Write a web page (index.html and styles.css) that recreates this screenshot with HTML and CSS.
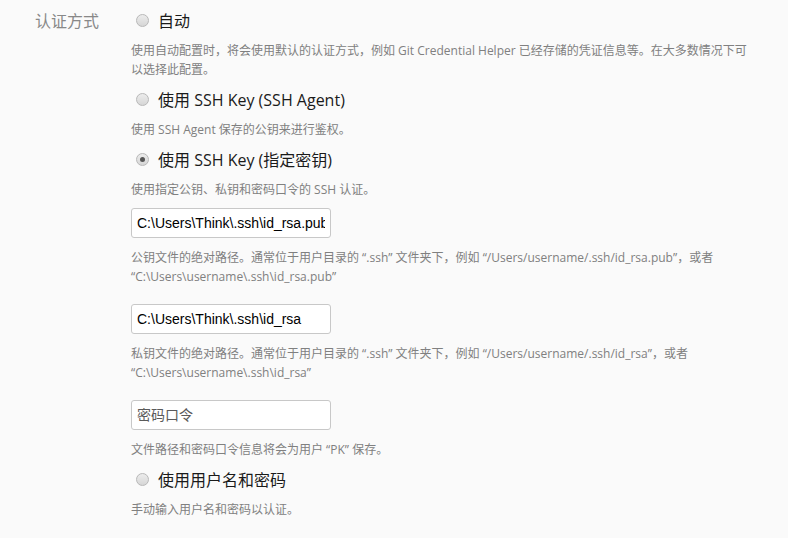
FILE: index.html
```html
<!DOCTYPE html>
<html lang="zh-CN">
<head>
    <meta charset="UTF-8">
    <meta name="viewport" content="width=device-width, initial-scale=1.0">
    <title>认证方式</title>
    <link rel="stylesheet" href="styles.css">
</head>
<body>
    <div class="setting-row">
        <div class="setting-label">认证方式</div>
        <div class="setting-body">
            <label class="option">
                <input type="radio" name="auth">
                <span>自动</span>
            </label>
            <p class="hint">使用自动配置时，将会使用默认的认证方式，例如 Git Credential Helper 已经存储的凭证信息等。在大多数情况下可以选择此配置。</p>

            <label class="option">
                <input type="radio" name="auth">
                <span>使用 SSH Key (SSH Agent)</span>
            </label>
            <p class="hint">使用 SSH Agent 保存的公钥来进行鉴权。</p>

            <label class="option">
                <input type="radio" name="auth" checked>
                <span>使用 SSH Key (指定密钥)</span>
            </label>
            <p class="hint">使用指定公钥、私钥和密码口令的 SSH 认证。</p>

            <div class="key-fields">
                <input class="text-field" type="text" value="C:\Users\Think\.ssh\id_rsa.pub">
                <p class="hint field-hint">公钥文件的绝对路径。通常位于用户目录的 “.ssh” 文件夹下，例如 “/Users/username/.ssh/id_rsa.pub”，或者 “C:\Users\username\.ssh\id_rsa.pub”</p>

                <input class="text-field" type="text" value="C:\Users\Think\.ssh\id_rsa">
                <p class="hint field-hint">私钥文件的绝对路径。通常位于用户目录的 “.ssh” 文件夹下，例如 “/Users/username/.ssh/id_rsa”，或者 “C:\Users\username\.ssh\id_rsa”</p>

                <input class="text-field" type="password" placeholder="密码口令">
                <p class="hint">文件路径和密码口令信息将会为用户 “PK” 保存。</p>
            </div>

            <label class="option">
                <input type="radio" name="auth">
                <span>使用用户名和密码</span>
            </label>
            <p class="hint">手动输入用户名和密码以认证。</p>
        </div>
    </div>
</body>
</html>
```

FILE: styles.css
```css
* {
    margin: 0;
    padding: 0;
    box-sizing: border-box;
}

body {
    background: #fafafa;
    font-family: "Open Sans", "Noto Sans CJK SC", sans-serif;
    color: #222;
    min-height: 100vh;
}

.setting-row {
    display: grid;
    grid-template-columns: 131px 620px;
    padding-top: 8px;
}

.setting-label {
    padding-left: 35px;
    font-size: 16px;
    line-height: 26px;
    color: #888;
}

.setting-body {
    display: flex;
    flex-direction: column;
    align-items: flex-start;
}

.option {
    display: flex;
    align-items: center;
    height: 24px;
    font-size: 16px;
    color: #1a1a1a;
    cursor: pointer;
}

.option input {
    appearance: none;
    -webkit-appearance: none;
    width: 13px;
    height: 13px;
    margin: 0 9px 0 5px;
    border: 1px solid #b8b8b8;
    border-radius: 50%;
    background: linear-gradient(180deg, #ececec 0%, #d6d6d6 100%);
    position: relative;
}

.option input:checked::after {
    content: "";
    position: absolute;
    left: 3px;
    top: 3px;
    width: 5px;
    height: 5px;
    border-radius: 50%;
    background: #555;
}

.hint {
    font-size: 12px;
    line-height: 19px;
    color: #808080;
    margin: 9px 0 8px;
}

.key-fields {
    display: flex;
    flex-direction: column;
    align-items: flex-start;
    margin-top: 1px;
}

.key-fields .hint {
    margin-top: 10px;
}

.text-field {
    width: 200px;
    height: 30px;
    padding: 0 5px;
    border: 1px solid #c8c8c8;
    border-radius: 3px;
    background: #fff;
    font-family: "Liberation Sans", "Noto Sans CJK SC", sans-serif;
    font-size: 14px;
    color: #000;
    outline: none;
}

.text-field::placeholder {
    font-family: "Noto Sans CJK SC", sans-serif;
    color: #5a5a5a;
}

.key-fields .field-hint {
    margin-bottom: 18px;
}
```
